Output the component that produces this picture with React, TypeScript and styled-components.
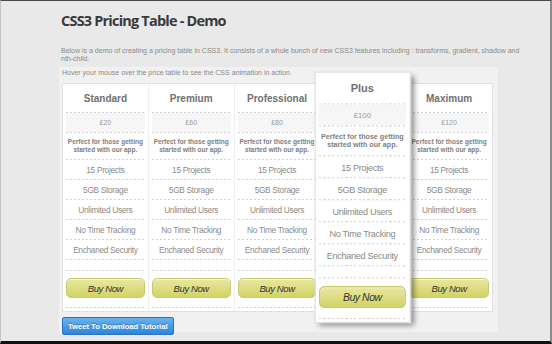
import React from 'react'
import styled, { createGlobalStyle } from 'styled-components'

const GlobalStyle = createGlobalStyle`
  html, body {
    margin: 0;
    padding: 0;
    background: #e9e9e9;
  }

  body {
    font-family: 'Liberation Sans', Arial, sans-serif;
  }
`

const plans = [
  { name: 'Standard', price: '£20' },
  { name: 'Premium', price: '£60' },
  { name: 'Professional', price: '£80' },
  { name: 'Plus', price: '£100', featured: true },
  { name: 'Maximum', price: '£120' },
]

const features = [ '15 Projects', '5GB Storage', 'Unlimited Users', 'No Time Tracking', 'Enchaned Security' ]

export default function App() {
  return (
    <>
      <GlobalStyle />
      <Frame>
        <Title>CSS3 Pricing Table - Demo</Title>
        <Intro>
          Below is a demo of creating a pricing table in CSS3. It consists of a whole bunch of new CSS3 features including : transforms, gradient, shadow and
          <br />
          nth-child.
        </Intro>
        <Panel>
          <Hint>Hover your mouse over the price table to see the CSS animation in action.</Hint>
          <PriceTable>
            {
              plans.map(plan => (
                <Column key={ plan.name } $featured={ plan.featured }>
                  <Header>{ plan.name }</Header>
                  <Divider />
                  <Price>{ plan.price }</Price>
                  <Divider />
                  <Description>Perfect for those getting<br />started with our app.</Description>
                  <Divider />
                  {
                    features.map(feature => (
                      <React.Fragment key={ feature }>
                        <Feature>{ feature }</Feature>
                        <Divider />
                      </React.Fragment>
                    ))
                  }
                  <Spacer />
                  <Divider />
                  <ButtonCell>
                    <BuyButton>Buy Now</BuyButton>
                  </ButtonCell>
                  <Divider />
                </Column>
              ))
            }
          </PriceTable>
          <TweetButton>Tweet To Download Tutorial</TweetButton>
        </Panel>
      </Frame>
    </>
  )
}

const Frame = styled.div`
  width: 552px;
  height: 344px;
  box-sizing: border-box;
  overflow: hidden;
  padding: 10px 0 0 58px;
  border-top: 1px solid #4a4a4a;
  border-left: 1px solid #c4c4c4;
  border-right: 2px solid #8a8a8a;
  border-bottom: 3px solid #111;
`

const Title = styled.div`
  margin: 0 0 0 2px;
  font-family: 'Open Sans', 'Liberation Sans', sans-serif;
  font-size: 14.5px;
  font-weight: 700;
  line-height: 20px;
  letter-spacing: -0.8px;
  color: #3a3a3a;
`

const Intro = styled.p`
  margin: 16px 0 0 2px;
  font-size: 7px;
  line-height: 7.5px;
  color: #8a8a8a;
  white-space: nowrap;
`

const Panel = styled.div`
  width: 439px;
  height: 265px;
  box-sizing: border-box;
  margin-top: 5px;
  padding: 2px 5px 0 3px;
  background: #f1f1f1;
`

const Hint = styled.p`
  margin: 0;
  font-size: 7px;
  line-height: 7.5px;
  color: #8a8a8a;
`

const PriceTable = styled.div`
  display: grid;
  grid-template-columns: repeat(5, 1fr);
  width: 431px;
  box-sizing: border-box;
  margin-top: 6.5px;
  border: 1px solid #e2e2e2;
  background: #fff;
`

const Column = styled.div<{ $featured?: boolean }>`
  display: flex;
  flex-direction: column;
  padding-bottom: 3px;
  background: #fff;
  border-right: 1px solid #efefef;
  position: ${ p => p.$featured ? 'relative' : 'static' };
  z-index: ${ p => p.$featured ? 1 : 'auto' };
  transform: ${ p => p.$featured ? 'scale(1.1)' : 'none' };
  box-shadow: ${ p => p.$featured ? '3px 3px 5px rgba(0, 0, 0, 0.45)' : 'none' };
  outline: ${ p => p.$featured ? '1px solid #e2e2e2' : 'none' };

  &:last-child {
    border-right: none;
  }
`

const Header = styled.div`
  height: 28px;
  display: flex;
  align-items: center;
  justify-content: center;
  font-size: 10px;
  font-weight: 700;
  color: #707070;
`

const Divider = styled.div`
  height: 1px;
  margin: 0 3px;
  background: repeating-linear-gradient(90deg, #d2d2d2 0 2px, transparent 2px 4px);
`

const Price = styled.div`
  height: 19px;
  margin: 0 3px;
  display: flex;
  align-items: center;
  justify-content: center;
  background: #f6f6f6;
  font-size: 7px;
  color: #999;
`

const Description = styled.div`
  height: 26px;
  display: flex;
  align-items: center;
  justify-content: center;
  text-align: center;
  font-size: 6.5px;
  font-weight: 700;
  line-height: 8px;
  color: #808080;
`

const Feature = styled.div`
  height: 19px;
  display: flex;
  align-items: center;
  justify-content: center;
  font-size: 8.3px;
  letter-spacing: -0.3px;
  color: #8a8a8a;
`

const Spacer = styled.div`
  height: 10px;
`

const ButtonCell = styled.div`
  padding: 7px 3px 9px;
`

const BuyButton = styled.button`
  display: block;
  width: 100%;
  height: 20px;
  padding: 0;
  border: 1px solid #c9c96e;
  border-radius: 5px;
  background: linear-gradient(#e8e8a2, #d2d365);
  box-shadow: inset 0 1px 0 rgba(255, 255, 255, 0.6);
  font-family: 'Liberation Sans', Arial, sans-serif;
  font-size: 9.5px;
  font-style: italic;
  letter-spacing: -0.4px;
  color: #333;
`

const TweetButton = styled.button`
  display: block;
  height: 18px;
  margin-top: 5px;
  padding: 0 5px;
  border: 1px solid #2b73c2;
  border-radius: 2px;
  background: linear-gradient(#6ab3f0, #2e84d8);
  font-family: 'Liberation Sans', Arial, sans-serif;
  font-size: 7.6px;
  font-weight: 700;
  color: #fff;
  text-shadow: 0 -1px 0 rgba(0, 0, 0, 0.25);
`
